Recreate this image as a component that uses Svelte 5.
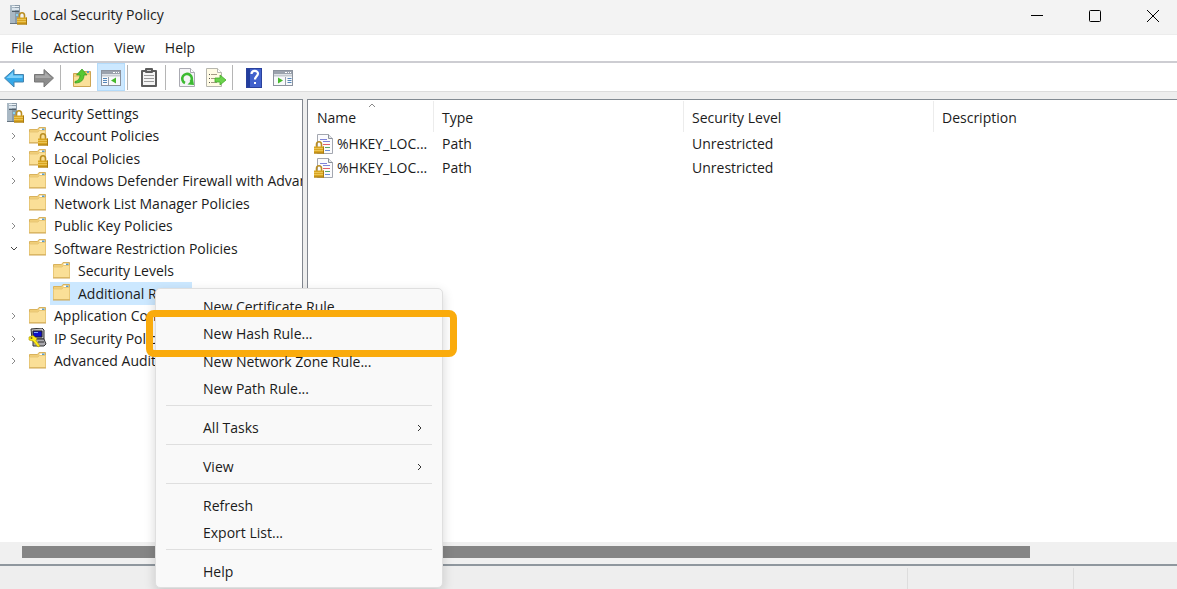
<script>
  let menus = ["File", "Action", "View", "Help"];

  let nodes = [
    { label: "Security Settings", depth: 0, icon: "server", arrow: "" },
    { label: "Account Policies", depth: 1, icon: "locked", arrow: "closed" },
    { label: "Local Policies", depth: 1, icon: "locked", arrow: "closed" },
    { label: "Windows Defender Firewall with Advanced Security", depth: 1, icon: "folder", arrow: "closed" },
    { label: "Network List Manager Policies", depth: 1, icon: "folder", arrow: "" },
    { label: "Public Key Policies", depth: 1, icon: "folder", arrow: "closed" },
    { label: "Software Restriction Policies", depth: 1, icon: "folder", arrow: "open" },
    { label: "Security Levels", depth: 2, icon: "folder", arrow: "" },
    { label: "Additional Rules", depth: 2, icon: "folder", arrow: "" },
    { label: "Application Control Policies", depth: 1, icon: "folder", arrow: "closed" },
    { label: "IP Security Policies on Local Computer", depth: 1, icon: "ipsec", arrow: "closed" },
    { label: "Advanced Audit Policy Configuration", depth: 1, icon: "folder", arrow: "closed" },
  ];
  let selected = $state("Additional Rules");

  let rules = [
    { name: "%HKEY_LOC...", type: "Path", level: "Unrestricted", description: "" },
    { name: "%HKEY_LOC...", type: "Path", level: "Unrestricted", description: "" },
  ];

  // each inner list is closed off by a separator line
  let contextMenu = [
    [
      { label: "New Certificate Rule..." },
      { label: "New Hash Rule...", marked: true },
      { label: "New Network Zone Rule..." },
      { label: "New Path Rule..." },
    ],
    [{ label: "All Tasks", sub: true }],
    [{ label: "View", sub: true }],
    [{ label: "Refresh" }, { label: "Export List..." }],
    [{ label: "Help" }],
  ];
</script>

{#snippet lock()}
  <path d="M12.500 13v-2.500a2.500 2.800 0 0 1 5 0V13" fill="none" stroke="#b98d22" stroke-width="1.600" />
  <rect x="10" y="12.500" width="10" height="7" fill="#d9a520" />
  <path d="M10 14.500h10M10 16.500h10" stroke="#f0cb62" stroke-width="0.800" />
  <path d="M10 19h10M19.500 12.500v7" stroke="#a87a12" />
{/snippet}

{#snippet server()}
  <svg class="icon" viewBox="0 0 20 20" aria-hidden="true">
    <rect x="2" y="0" width="10" height="19" fill="#8c9ba8" />
    <rect x="2" y="0" width="5" height="19" fill="#a9b8c4" />
    <rect x="4" y="1" width="7" height="1" fill="#eef4f8" />
    <rect x="4" y="3" width="7" height="2" fill="#dce6ee" />
    <rect x="4" y="6" width="7" height="1" fill="#4f5d69" />
    <rect x="8" y="9" width="2" height="2" fill="#86d4f2" />
    <rect x="2" y="18" width="10" height="1" fill="#66747f" />
    <g transform="translate(-1 0)">{@render lock()}</g>
  </svg>
{/snippet}

{#snippet folder(locked)}
  <svg class="icon" viewBox="0 0 20 20" aria-hidden="true">
    <path d="M1.500 3.500h8l1.500-2h6.500v15h-16z" fill="#f0ce78" stroke="#d9b25c" />
    <path d="M11.500 2.500h5v1.500h-5z" fill="#fff" />
    <path d="M14 2.500h2.500V4H14z" fill="#5a9cc8" />
    <path d="M1.500 6h8.500l1.500-1.500h6V16.500h-16z" fill="#fadf97" stroke="#e8c777" />
    <path d="M1 17h17" stroke="#cfa653" />
    {#if locked}{@render lock()}{/if}
  </svg>
{/snippet}

{#snippet ipsec()}
  <svg class="icon" viewBox="0 0 20 20" aria-hidden="true">
    <path d="M3 1l11-1 2 2v9H4z" fill="#bcbcc0" stroke="#333" />
    <path d="M5 3h9v6H5z" fill="#1010c8" stroke="#222" />
    <path d="M6 4h4v1H6z" fill="#7ba8ff" />
    <path d="M5 11h11l2 5-2 2H5z" fill="#aaa9ae" stroke="#333" />
    <path d="M10 14h6" stroke="#333" />
    <path d="M1 9l4-1.500 4 3-1 2 4 5.500-2 1-5-6-4-1z" fill="#ffec16" stroke="#a39100" stroke-width="0.600" />
    <circle cx="3.500" cy="10" r="1" fill="#77661a" />
  </svg>
{/snippet}

{#snippet panelIcon(flip)}
  <rect x="2.500" y="4.500" width="19" height="15" fill="#f8f9fb" stroke="#8b929d" />
  <rect x="3" y="5" width="18" height="3" fill="#9ba2ad" />
  <path d="M14 6.500h2M17 6.500h1M19 6.500h1" stroke="#fff" />
  <path d="M3 9.500h18" stroke="#c5cad1" stroke-width="2" />
  {#if flip}
    <path d="M14.500 11v8" stroke="#9aa1ab" />
    <path d="M16.500 12.500h4M16.500 14.500h4M16.500 16.500h4" stroke="#5586b8" />
    <path d="M7 11.500v6l5-3z" fill="#45b92c" />
  {:else}
    <path d="M9.500 11v8" stroke="#9aa1ab" />
    <path d="M4 12.500h4M4 14.500h4M4 16.500h4" stroke="#5586b8" />
    <path d="M17 11.500v6l-5-3z" fill="#45b92c" />
  {/if}
{/snippet}

<div class="window">
  <header class="titlebar">
    {@render server()}
    <h1>Local Security Policy</h1>
    <div class="caption">
      <button aria-label="Minimize">
        <svg viewBox="0 0 24 24"><path d="M6 12.500h12" /></svg>
      </button>
      <button aria-label="Maximize">
        <svg viewBox="0 0 24 24"><rect x="6.500" y="7.500" width="11" height="11" rx="1" /></svg>
      </button>
      <button aria-label="Close">
        <svg viewBox="0 0 24 24"><path d="M6 7l12 12M18 7L6 19" /></svg>
      </button>
    </div>
  </header>

  <nav class="menubar">
    {#each menus as item}
      <button>{item}</button>
    {/each}
  </nav>

  <div class="toolbar">
    <button aria-label="Back">
      <svg viewBox="0 0 24 24">
        <path d="M1.500 12L11 3.500v5h9.500v7.500H11v5z" fill="#35a8e8" stroke="#4583ad" />
        <path d="M3.500 12L10 6v3.500h9.500V12z" fill="#7dd0fa" />
      </svg>
    </button>
    <button aria-label="Forward">
      <svg viewBox="0 0 24 24">
        <path d="M21.500 12L12 3.500v5H2.500v7.500H12v5z" fill="#8c8c8c" stroke="#777" />
        <path d="M19.500 12L13 6v3.500H3.500V12z" fill="#a9a9a9" />
      </svg>
    </button>
    <span class="sep"></span>
    <button aria-label="Up one level">
      <svg viewBox="0 0 24 24">
        <path d="M3.500 7.500h8l1.500-2h7.500v15h-17z" fill="#f0cd78" stroke="#cda552" />
        <path d="M4 11h8l2-2h6v11H4z" fill="#fae09a" />
        <path d="M17 5h2v2h-2z" fill="#5a9cc8" />
        <path d="M5 15.500c4-1 5-4 5-6.500H6.500l5.500-6 5 6h-3c0 5-3 8-9 8z" fill="#55c832" stroke="#329a1e" stroke-width="0.700" />
      </svg>
    </button>
    <button class="on" aria-label="Show or hide console tree">
      <svg viewBox="0 0 24 24">{@render panelIcon(false)}</svg>
    </button>
    <span class="sep"></span>
    <button aria-label="Paste">
      <svg viewBox="0 0 24 24">
        <rect x="4" y="4" width="16" height="17" rx="1" fill="#5c5c5c" />
        <rect x="6" y="6" width="12" height="13" fill="#f4f4f4" />
        <rect x="8" y="2" width="8" height="5" rx="1" fill="#5c5c5c" />
        <path d="M10 4.500h4" stroke="#ccc" />
        <path d="M7 9.500h10M7 12.500h10M7 15.500h10" stroke="#999" />
      </svg>
    </button>
    <span class="sep"></span>
    <button aria-label="Refresh">
      <svg viewBox="0 0 24 24">
        <path d="M4.500 2.500h11l4 4v14h-15z" fill="#f5f5f8" stroke="#aaaab2" />
        <path d="M15.500 2.500v4h4" fill="#fff" stroke="#aaaab2" />
        <path d="M10 17a4.800 4.800 0 1 1 5.500-1" fill="none" stroke="#3cba32" stroke-width="2.600" />
        <path d="M12.500 18.500l6.500.500-1-6z" fill="#3cba32" />
      </svg>
    </button>
    <button aria-label="Export list">
      <svg viewBox="0 0 24 24">
        <path d="M2.500 2.500h11l4 4v14h-15z" fill="#fffbe5" stroke="#b6b6ae" />
        <path d="M13.500 2.500v4h4" fill="#fff" stroke="#b6b6ae" />
        <path d="M5 8.500h1M5 12.500h1M5 16.500h1" stroke="#555" />
        <path d="M7 8.500h6M7 12.500h6M7 16.500h6" stroke="#a49a83" />
        <path d="M11 12h5V9l6 5-6 5v-3h-5z" fill="#6bd34c" stroke="#42ac28" stroke-width="0.800" />
      </svg>
    </button>
    <span class="sep"></span>
    <button aria-label="Help">
      <svg viewBox="0 0 24 24">
        <rect x="4.500" y="2.500" width="15" height="19" fill="#4262cc" stroke="#2a419c" />
        <path d="M5 3h3v18H5z" fill="#223d9e" />
        <path d="M9.500 8c0-4 6.500-4 6.500-.500 0 2.500-3 3-3 6" fill="none" stroke="#fff" stroke-width="2.200" />
        <rect x="12" y="16" width="2" height="2" fill="#fff" />
      </svg>
    </button>
    <button aria-label="Show or hide action pane">
      <svg viewBox="0 0 24 24">{@render panelIcon(true)}</svg>
    </button>
  </div>

  <main class="panes">
    <ul class="tree">
      {#each nodes as node}
        <li class="depth{node.depth}">
          <span class="arrow">
            {#if node.arrow === "closed"}
              <svg viewBox="0 0 8 8"><path d="M2 1l3 3-3 3" stroke="#8a8a8a" /></svg>
            {:else if node.arrow === "open"}
              <svg viewBox="0 0 8 8"><path d="M1 2l3 3 3-3" stroke="#444" /></svg>
            {/if}
          </span>
          <button class="node" class:selected={node.label === selected} onclick={() => (selected = node.label)}>
            {#if node.icon === "server"}
              {@render server()}
            {:else if node.icon === "ipsec"}
              {@render ipsec()}
            {:else}
              {@render folder(node.icon === "locked")}
            {/if}
            <span>{node.label}</span>
          </button>
        </li>
      {/each}
    </ul>

    <section class="list">
      <table>
        <thead>
          <tr>
            <th class="name">
              <svg class="sort" viewBox="0 0 8 5"><path d="M1 4l3-3 3 3" /></svg>
              Name
            </th>
            <th>Type</th>
            <th>Security Level</th>
            <th class="rest">Description</th>
          </tr>
        </thead>
        <tbody>
          {#each rules as rule}
            <tr>
              <td class="name">
                <div class="rule">
                  <svg class="icon" viewBox="0 0 20 20" aria-hidden="true">
                    <path d="M3.500.500h11l4 4v15h-15z" fill="#fbfbfd" stroke="#a3a7b0" />
                    <path d="M14.500.500v4h4" fill="#e4e6ea" stroke="#8b9099" />
                    <path d="M6 5.500h7M9 7.500h7" stroke="#7f83d8" />
                    <path d="M9 10.500h7" stroke="#e0606a" />
                    <path d="M11 13.500h5" stroke="#58a868" />
                    <path d="M11 16.500h5" stroke="#6a8fd8" />
                    <g transform="translate(-10 0)">{@render lock()}</g>
                  </svg>
                  <span>{rule.name}</span>
                </div>
              </td>
              <td>{rule.type}</td>
              <td>{rule.level}</td>
              <td>{rule.description}</td>
            </tr>
          {/each}
        </tbody>
      </table>
    </section>
  </main>

  <div class="scroll"><div class="thumb"></div></div>

  <footer class="status">
    <span class="grow"></span>
    <span class="cell-wide"></span>
    <span class="cell"></span>
  </footer>

  <div class="context" role="menu">
    {#each contextMenu as group}
      <div class="group">
        {#each group as item}
          <button class:marked={item.marked} role="menuitem">
            {item.label}
            {#if item.sub}
              <svg viewBox="0 0 8 8"><path d="M2 1l3 3-3 3" /></svg>
            {/if}
          </button>
        {/each}
      </div>
    {/each}
  </div>
</div>

<style>
  :global(body) {
    background: #eee;
    overflow: hidden;
  }
  .window {
    position: relative;
    display: flex;
    flex-direction: column;
    height: 100vh;
    overflow: hidden;
    background: #eee;
    color: #1b1b1b;
    font-family: "Open Sans", "Noto Sans", sans-serif;
    font-size: 14px;
    line-height: 20px;
  }
  button {
    padding: 0;
    border: 0;
    background: none;
    color: inherit;
    font: inherit;
    white-space: nowrap;
  }
  .icon {
    flex: none;
    display: block;
    width: 20px;
    height: 20px;
  }

  /* title bar */
  .titlebar {
    flex: none;
    display: flex;
    align-items: center;
    gap: 5px;
    height: 30px;
    padding: 0 12px 4px 8px;
    border-bottom: 1px solid #ececec;
    background: #f3f3f3;
  }
  .titlebar h1 {
    flex: 1;
    margin: 0;
    font-size: 14px;
    font-weight: 400;
  }
  .caption {
    display: flex;
    gap: 34px;
  }
  .caption button,
  .caption svg {
    display: block;
    width: 24px;
    height: 24px;
  }
  .caption svg {
    fill: none;
    stroke: #000;
  }

  .menubar {
    flex: none;
    display: flex;
    gap: 20px;
    height: 26px;
    padding-left: 11px;
    border-bottom: 2px solid #cdcdd2;
    background: #fff;
  }

  .toolbar {
    flex: none;
    display: flex;
    align-items: center;
    gap: 1px;
    height: 28px;
    padding-left: 1px;
    border-bottom: 1px solid #ddd;
    background: #fff;
  }
  .toolbar button {
    width: 28px;
    height: 28px;
  }
  .toolbar svg {
    display: block;
    width: 24px;
    height: 24px;
    margin: 1px auto 0;
  }
  .toolbar .on {
    background: #cce8ff;
    box-shadow: inset 0 0 0 1px #b4dbfa;
  }
  .sep {
    width: 1px;
    height: 25px;
    margin: 0 6px 0 1px;
    background: #b5b5b5;
  }

  .panes {
    flex: 1;
    display: flex;
    gap: 4px;
    min-height: 0;
    margin-top: 7px;
  }
  .tree {
    flex: none;
    display: grid;
    grid-auto-rows: 23px 22px;
    align-content: start;
    box-sizing: border-box;
    width: 303px;
    margin: 0;
    padding: 2px 0 0;
    overflow: hidden;
    list-style: none;
    border-top: 1px solid #828a92;
    border-right: 1px solid #828790;
    background: #fff;
  }
  .tree li {
    display: flex;
    min-width: 0;
  }
  .arrow {
    flex: none;
    display: flex;
    align-items: center;
    justify-content: center;
    width: 24px;
    padding-left: 2px;
  }
  .arrow svg {
    width: 8px;
    height: 8px;
    fill: none;
  }
  .depth0 .arrow {
    width: 1px;
  }
  .depth2 .arrow {
    width: 48px;
  }
  .node {
    display: flex;
    align-items: center;
    gap: 6px;
    padding: 0 9px 0 2px;
  }
  .node .icon,
  .node :global(.icon) {
    margin-bottom: 1px;
  }
  .selected {
    background: #cce8ff;
  }

  /* rule list */
  .list {
    flex: 1;
    min-width: 0;
    overflow: hidden;
    padding-top: 1px;
    border-top: 1px solid #828a92;
    border-left: 1px solid #828790;
    background: #fff;
  }
  table {
    width: 100%;
    table-layout: fixed;
    border-collapse: separate;
    border-spacing: 0;
  }
  th,
  td {
    box-sizing: border-box;
    width: 250px;
    padding: 0 0 0 8px;
    text-align: left;
    font-weight: 400;
    white-space: nowrap;
  }
  th {
    position: relative;
    height: 31px;
    padding-top: 3px;
    border-right: 1px solid #ececec;
  }
  td {
    height: 24px;
  }
  th.name {
    width: 126px;
    padding-left: 9px;
  }
  td.name {
    width: 126px;
    padding-left: 6px;
  }
  th.rest {
    width: auto;
    border-right: 0;
  }
  .sort {
    position: absolute;
    top: 2px;
    left: 60px;
    width: 8px;
    height: 5px;
    fill: none;
    stroke: #888;
  }
  .rule {
    display: flex;
    align-items: center;
    gap: 3px;
  }

  .scroll {
    flex: none;
    height: 14px;
    padding: 4px 0;
    background: #f0f0f0;
  }
  .thumb {
    width: calc(100% - 169px);
    height: 12px;
    margin-left: 22px;
    background: #858585;
  }
  .status {
    flex: none;
    display: flex;
    height: 23px;
    border-top: 2px solid #8f979e;
  }
  .status span {
    margin-top: 2px;
  }
  .grow {
    flex: 1;
  }
  .cell-wide,
  .cell {
    box-sizing: border-box;
    width: 166px;
    border-left: 1px solid #ddd;
  }
  .cell {
    width: 104px;
  }

  /* right-click menu, floats over the panes */
  .context {
    position: absolute;
    top: 288px;
    left: 155px;
    box-sizing: border-box;
    width: 288px;
    padding: 1px 10px 4px;
    border: 1px solid #dfdfdf;
    border-radius: 5px;
    background: #f9f9f9;
    box-shadow: 0 4px 12px rgba(0, 0, 0, 0.16);
  }
  .group {
    display: grid;
    grid-auto-rows: 28px 27px;
  }
  .group + .group {
    margin-top: 5px;
    padding-top: 5px;
    border-top: 1px solid #dfdfdf;
  }
  .context button {
    position: relative;
    display: flex;
    align-items: center;
    justify-content: space-between;
    padding: 5px 8px 0 37px;
  }
  .context svg {
    width: 8px;
    height: 8px;
    fill: none;
    stroke: #333;
  }
  .marked::after {
    content: "";
    position: absolute;
    inset: -8px -25px -12px -20px;
    border: 7px solid #faab0c;
    border-radius: 8px;
  }
</style>
